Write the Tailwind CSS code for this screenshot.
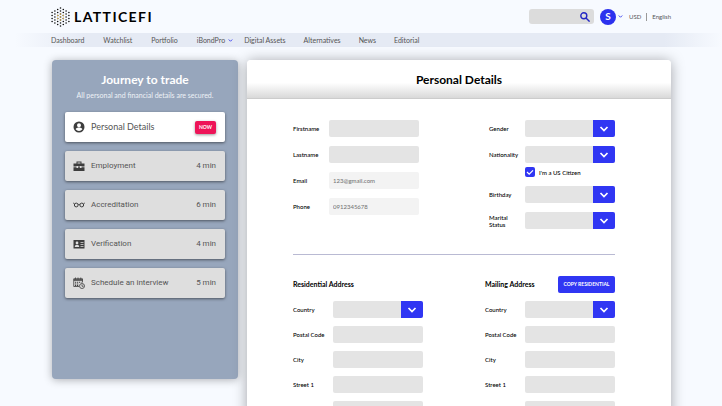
<!DOCTYPE html>
<html lang="en">
<head>
    <meta charset="UTF-8">
    <meta name="viewport" content="width=device-width, initial-scale=1.0">
    <title>LatticeFi - Personal Details</title>
    <script src="https://cdn.jsdelivr.net/npm/@tailwindcss/browser@4"></script>
</head>
<body class="flex flex-col h-screen overflow-hidden bg-[#f7faff] font-['Lato',sans-serif] text-black">

    <!-- Shared icons -->
    <svg class="hidden">
        <symbol id="chevron" viewBox="0 0 10 6">
            <path d="M1.5 1 5 4.5 8.5 1" fill="none" stroke="currentColor" stroke-width="1.7" />
        </symbol>
    </svg>

    <!-- Top bar -->
    <header class="flex items-center justify-between h-[33px] shrink-0 px-[51px]">
        <a href="#" class="flex items-center gap-1 text-sm font-bold tracking-widest">
            <svg class="w-[19px] h-5" viewBox="0 0 19 20" fill="none" stroke="#111" stroke-width="1.6" stroke-linecap="round" stroke-dasharray="0 3">
                <path d="M1.1 5.5v9.1M3.9 4v12.1M6.7 2.5v15.1M9.5 1v18.1M12.3 2.5v15.1M15.1 4v12.1M17.9 5.5v9.1" />
                <path stroke="#c9a24a" d="M6.7 8.5v3.1M9.5 7v6.1M12.3 8.5v3.1" />
            </svg>
            LATTICEFI
        </a>
        <div class="flex items-center text-[6px] text-[#555]">
            <label class="flex items-center w-[65px] h-[15px] pr-1 rounded-[3px] bg-[#dcdcdc]">
                <input type="search" aria-label="Search" class="w-full min-w-0 px-1 outline-none">
                <svg class="size-[10px] shrink-0" viewBox="0 0 10 10" fill="none" stroke="#2427c4" stroke-width="1.4">
                    <circle cx="3.8" cy="3.8" r="3" />
                    <path d="m6 6 3.6 3.6" />
                </svg>
            </label>
            <button class="flex items-center gap-[2px] ml-[6px] text-[#2c31ee]">
                <span class="flex items-center justify-center size-4 rounded-full bg-[#2c31ee] text-[10px] font-bold text-white">S</span>
                <svg class="w-[5px] h-[3px]"><use href="#chevron" /></svg>
            </button>
            <a href="#" class="ml-[6px]">USD</a>
            <span class="w-px h-2 mx-[5px] bg-[#999]"></span>
            <a href="#">English</a>
        </div>
    </header>

    <nav class="flex items-center h-[14px] shrink-0 px-[51px] text-[7px] text-[#555] bg-[linear-gradient(to_right,#f7faff_2%,#e5eaf4_12%,#e5eaf4_92%,#f7faff)]">
        <a href="#">Dashboard</a>
        <a href="#" class="ml-[19px]">Watchlist</a>
        <a href="#" class="ml-[19px]">Portfolio</a>
        <a href="#" class="flex items-center gap-[3px] ml-[19px]">iBondPro
            <svg class="w-[5px] h-[3px] text-[#2c31ee]"><use href="#chevron" /></svg>
        </a>
        <a href="#" class="ml-[11px]">Digital Assets</a>
        <a href="#" class="ml-[18px]">Alternatives</a>
        <a href="#" class="ml-[18px]">News</a>
        <a href="#" class="ml-[18px]">Editorial</a>
    </nav>

    <div class="flex items-start gap-[9px] pt-[13px] pl-[52px] pr-[51px]">

        <!-- Steps -->
        <aside class="w-[186px] h-[319px] shrink-0 px-[13px] pt-3 rounded bg-[#97a6bc] shadow-[0_1px_8px_rgba(0,0,0,0.3)]">
            <h2 class="text-xs leading-4 font-bold text-center text-white">Journey to trade</h2>
            <p class="mt-[2px] text-[7px] leading-[10px] text-center text-[#eef2f7]">All personal and financial details are secured.</p>
            <ul class="flex flex-col gap-[9px] mt-3 font-['Roboto',sans-serif] text-[8px] text-[#555]">
                <li class="flex items-center h-[30px] pl-2 pr-[9px] rounded-xs bg-white shadow-[0_1px_3px_rgba(0,0,0,0.5)]">
                    <svg class="w-3 h-3 mr-[6px]" viewBox="0 0 24 24" fill="#3d3d3d">
                        <path d="M12 1a11 11 0 1 0 0 22 11 11 0 0 0 0-22Zm0 3.5a4 4 0 1 1 0 8 4 4 0 0 1 0-8Zm0 15.5a8 8 0 0 1-6.7-3.6c0-2.2 4.5-3.4 6.7-3.4s6.7 1.2 6.7 3.4A8 8 0 0 1 12 20Z" />
                    </svg>
                    <span class="grow font-['Lato',sans-serif] text-[9px]">Personal Details</span>
                    <span class="px-1 rounded-xs bg-[#ee1458] font-['Lato',sans-serif] text-[5px] leading-[13px] font-bold text-white shadow-[0_1px_3px_rgba(0,0,0,0.4)]">NOW</span>
                </li>
                <li class="flex items-center h-[30px] pl-2 pr-[9px] rounded-xs bg-[#dedede] shadow-[0_1px_3px_rgba(0,0,0,0.5)]">
                    <svg class="w-3 h-3 mr-[6px]" viewBox="0 0 24 24" fill="#3d3d3d">
                        <path d="M7 7V3h10v4h6v6h-6v-1h-3v1h-4v-1H7v1H1V7h6Zm2 0h6V5H9v2ZM1 14.500h6V16h3v-1.500h4V16h3v-1.500h6V22H1v-7.500Z" />
                    </svg>
                    <span class="grow">Employment</span>
                    <span>4 min</span>
                </li>
                <li class="flex items-center h-[30px] pl-2 pr-[9px] rounded-xs bg-[#dedede] shadow-[0_1px_3px_rgba(0,0,0,0.5)]">
                    <svg class="w-3 h-3 mr-[6px]" viewBox="0 0 24 24" fill="none" stroke="#3d3d3d" stroke-width="2">
                        <circle cx="6.5" cy="12" r="3.800" />
                        <circle cx="17.5" cy="12" r="3.800" />
                        <path d="M10.300 11.500c.5-1 2.900-1 3.400 0M3 10 .5 8M21 10l2.500-2" />
                    </svg>
                    <span class="grow">Accreditation</span>
                    <span>6 min</span>
                </li>
                <li class="flex items-center h-[30px] pl-2 pr-[9px] rounded-xs bg-[#dedede] shadow-[0_1px_3px_rgba(0,0,0,0.5)]">
                    <svg class="w-3 h-3 mr-[6px]" viewBox="0 0 24 24">
                        <path fill="#3d3d3d" d="M1 4h22v17H1z" />
                        <path fill="#dedede" d="M8 7a2.500 2.500 0 1 1 0 5.500A2.500 2.500 0 0 1 8 7ZM3.500 18c0-3 2-4.500 4.500-4.500s4.500 1.500 4.500 4.500ZM15 8h6v1.500h-6zM15 12h6v1.500h-6zM15 16h6v1.500h-6z" />
                    </svg>
                    <span class="grow">Verification</span>
                    <span>4 min</span>
                </li>
                <li class="flex items-center h-[30px] pl-2 pr-[9px] rounded-xs bg-[#dedede] shadow-[0_1px_3px_rgba(0,0,0,0.5)]">
                    <svg class="w-3 h-3 mr-[6px]" viewBox="0 0 24 24" fill="none" stroke="#3d3d3d" stroke-width="1.600">
                        <path d="M12 19H1.500V3.500H19V11M5 1v4M10 1v4M15.500 1v4" />
                        <path stroke-width="3" d="M1.500 6H19" />
                        <path stroke-width="2" stroke-dasharray="2.500 1.500" d="M4 10.500h13M4 14h8M4 17h8" />
                        <circle cx="18" cy="18" r="5" />
                        <path d="M18 15v3.500h3" />
                    </svg>
                    <span class="grow">Schedule an interview</span>
                    <span>5 min</span>
                </li>
            </ul>
        </aside>

        <!-- Form -->
        <main class="grow rounded bg-white shadow-[0_1px_14px_rgba(0,0,0,0.35)]">
            <h1 class="h-[39px] rounded-t border-b border-[#ccc] bg-linear-to-b from-white from-60% to-[#d9d9d9] text-xs leading-[39px] font-bold text-center">Personal Details</h1>

            <form class="pt-[21px] pl-[46px] pr-14 text-[6px] leading-[7px] font-medium">
                <section class="flex justify-between">
                    <div class="flex flex-col gap-[9px]">
                        <div class="flex items-center">
                            <label for="firstname" class="w-9">Firstname</label>
                            <input id="firstname" type="text" class="w-[90px] h-[17px] px-1 rounded-xs bg-[#e4e4e4]">
                        </div>
                        <div class="flex items-center">
                            <label for="lastname" class="w-9">Lastname</label>
                            <input id="lastname" type="text" class="w-[90px] h-[17px] px-1 rounded-xs bg-[#e4e4e4]">
                        </div>
                        <div class="flex items-center">
                            <label for="email" class="w-9">Email</label>
                            <input id="email" type="email" value="123@gmail.com" class="w-[90px] h-[17px] px-1 rounded-xs bg-[#f3f3f3] text-[#777]">
                        </div>
                        <div class="flex items-center">
                            <label for="phone" class="w-9">Phone</label>
                            <input id="phone" type="tel" value="0912345678" class="w-[90px] h-[17px] px-1 rounded-xs bg-[#f3f3f3] text-[#777]">
                        </div>
                    </div>

                    <div class="flex flex-col gap-[9px]">
                        <div class="flex items-center">
                            <label for="gender" class="w-9">Gender</label>
                            <div class="relative w-[90px] h-[17px] rounded-xs bg-[#e4e4e4]">
                                <select id="gender" class="size-full px-1 appearance-none"><option></option></select>
                                <span class="absolute inset-y-0 right-0 flex items-center justify-center w-[22px] rounded-r-xs bg-[#3036f3] text-white pointer-events-none"><svg class="w-[10px] h-[6px]"><use href="#chevron" /></svg></span>
                            </div>
                        </div>
                        <div>
                            <div class="flex items-center">
                                <label for="nationality" class="w-9">Nationality</label>
                                <div class="relative w-[90px] h-[17px] rounded-xs bg-[#e4e4e4]">
                                    <select id="nationality" class="size-full px-1 appearance-none"><option></option></select>
                                    <span class="absolute inset-y-0 right-0 flex items-center justify-center w-[22px] rounded-r-xs bg-[#3036f3] text-white pointer-events-none"><svg class="w-[10px] h-[6px]"><use href="#chevron" /></svg></span>
                                </div>
                            </div>
                            <label class="flex items-center gap-1 mt-1 ml-9">
                                <span class="relative size-[10px]">
                                    <input type="checkbox" checked class="block size-full appearance-none rounded-xs bg-[#3036f3]">
                                    <svg class="absolute inset-0 size-full pointer-events-none" viewBox="0 0 10 10" fill="none" stroke="white" stroke-width="1.2"><path d="m2 5 2.200 2.200L8 3.300" /></svg>
                                </span>
                                I'm a US Citizen
                            </label>
                        </div>
                        <div class="flex items-center">
                            <label for="birthday" class="w-9">Birthday</label>
                            <div class="relative w-[90px] h-[17px] rounded-xs bg-[#e4e4e4]">
                                <select id="birthday" class="size-full px-1 appearance-none"><option></option></select>
                                <span class="absolute inset-y-0 right-0 flex items-center justify-center w-[22px] rounded-r-xs bg-[#3036f3] text-white pointer-events-none"><svg class="w-[10px] h-[6px]"><use href="#chevron" /></svg></span>
                            </div>
                        </div>
                        <div class="flex items-center">
                            <label for="marital" class="w-9">Marital<br>Status</label>
                            <div class="relative w-[90px] h-[17px] rounded-xs bg-[#e4e4e4]">
                                <select id="marital" class="size-full px-1 appearance-none"><option></option></select>
                                <span class="absolute inset-y-0 right-0 flex items-center justify-center w-[22px] rounded-r-xs bg-[#3036f3] text-white pointer-events-none"><svg class="w-[10px] h-[6px]"><use href="#chevron" /></svg></span>
                            </div>
                        </div>
                    </div>
                </section>

                <hr class="mt-[25px] mb-[21px] border-[#b9bad3]">

                <section class="flex justify-between">
                    <div class="flex flex-col gap-2">
                        <h2 class="text-[7px] leading-[17px] font-bold">Residential Address</h2>
                        <div class="flex items-center">
                            <label for="res-country" class="w-10">Country</label>
                            <div class="relative w-[90px] h-[17px] rounded-xs bg-[#e4e4e4]">
                                <select id="res-country" class="size-full px-1 appearance-none"><option></option></select>
                                <span class="absolute inset-y-0 right-0 flex items-center justify-center w-[22px] rounded-r-xs bg-[#3036f3] text-white pointer-events-none"><svg class="w-[10px] h-[6px]"><use href="#chevron" /></svg></span>
                            </div>
                        </div>
                        <div class="flex items-center">
                            <label for="res-postal" class="w-10">Postal Code</label>
                            <input id="res-postal" type="text" class="w-[90px] h-[17px] px-1 rounded-xs bg-[#e4e4e4]">
                        </div>
                        <div class="flex items-center">
                            <label for="res-city" class="w-10">City</label>
                            <input id="res-city" type="text" class="w-[90px] h-[17px] px-1 rounded-xs bg-[#e4e4e4]">
                        </div>
                        <div class="flex items-center">
                            <label for="res-street1" class="w-10">Street 1</label>
                            <input id="res-street1" type="text" class="w-[90px] h-[17px] px-1 rounded-xs bg-[#e4e4e4]">
                        </div>
                        <input type="text" aria-label="Street 2" class="w-[90px] h-[17px] ml-10 px-1 rounded-xs bg-[#e4e4e4]">
                    </div>

                    <div class="flex flex-col gap-2">
                        <div class="flex items-center justify-between">
                            <h2 class="text-[7px] font-bold">Mailing Address</h2>
                            <button type="button" class="w-[57px] h-[17px] rounded-xs bg-[#3036f3] text-[5px] font-bold text-white">COPY RESIDENTIAL</button>
                        </div>
                        <div class="flex items-center">
                            <label for="mail-country" class="w-10">Country</label>
                            <div class="relative w-[90px] h-[17px] rounded-xs bg-[#e4e4e4]">
                                <select id="mail-country" class="size-full px-1 appearance-none"><option></option></select>
                                <span class="absolute inset-y-0 right-0 flex items-center justify-center w-[22px] rounded-r-xs bg-[#3036f3] text-white pointer-events-none"><svg class="w-[10px] h-[6px]"><use href="#chevron" /></svg></span>
                            </div>
                        </div>
                        <div class="flex items-center">
                            <label for="mail-postal" class="w-10">Postal Code</label>
                            <input id="mail-postal" type="text" class="w-[90px] h-[17px] px-1 rounded-xs bg-[#e4e4e4]">
                        </div>
                        <div class="flex items-center">
                            <label for="mail-city" class="w-10">City</label>
                            <input id="mail-city" type="text" class="w-[90px] h-[17px] px-1 rounded-xs bg-[#e4e4e4]">
                        </div>
                        <div class="flex items-center">
                            <label for="mail-street1" class="w-10">Street 1</label>
                            <input id="mail-street1" type="text" class="w-[90px] h-[17px] px-1 rounded-xs bg-[#e4e4e4]">
                        </div>
                        <input type="text" aria-label="Street 2" class="w-[90px] h-[17px] ml-10 px-1 rounded-xs bg-[#e4e4e4]">
                    </div>
                </section>
            </form>
        </main>
    </div>

</body>
</html>
